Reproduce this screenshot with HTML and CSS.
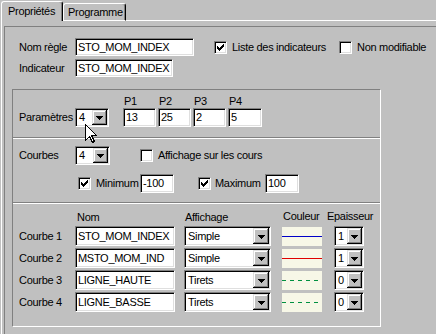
FILE: index.html
```html
<!DOCTYPE html>
<html lang="fr">
<head>
<meta charset="utf-8">
<title>Propriétés</title>
<link rel="stylesheet" href="styles.css">
</head>
<body>
<div class="win">
  <div class="tabs">
    <div class="tab active">Propriétés</div>
    <div class="tab inactive">Programme</div>
    <div class="tab-fill"></div>
  </div>
  <div class="panel">
    <div class="sunken">
      <div class="row r-nom">
        <span class="lbl">Nom règle</span>
        <span class="field sunk w-nom h18">STO_MOM_INDEX</span>
        <span class="check sunk ml-liste"><svg width="9" height="9" viewBox="0 0 9 9" shape-rendering="crispEdges"><path d="M1 3h1v3h-1zM2 4h1v3h-1zM3 5h1v3h-1zM4 4h1v3h-1zM5 3h1v3h-1zM6 2h1v3h-1zM7 1h1v3h-1z" fill="#000"/></svg></span>
        <span class="ctext w-liste">Liste des indicateurs</span>
        <span class="check sunk"></span>
        <span class="ctext">Non modifiable</span>
      </div>
      <div class="row r-ind">
        <span class="lbl">Indicateur</span>
        <span class="field sunk w-ind h18">STO_MOM_INDEX</span>
      </div>

      <div class="group">
        <div class="sec sec1">
          <div class="param-main">
            <span class="lbl">Paramètres</span>
            <span class="combo sunk w34 h19"><span class="cval">4</span><span class="cbtn sm"><svg width="7" height="4" viewBox="0 0 7 4" shape-rendering="crispEdges"><path d="M0 0H7V1H6V2H5V3H4V4H3V3H2V2H1V1H0Z"/></svg></span></span>
          </div>
          <div class="pcols">
            <div class="pcol"><span class="plbl">P1</span><span class="field sunk w33 h19">13</span></div>
            <div class="pcol"><span class="plbl">P2</span><span class="field sunk w33 h19">25</span></div>
            <div class="pcol"><span class="plbl">P3</span><span class="field sunk w33 h19">2</span></div>
            <div class="pcol"><span class="plbl">P4</span><span class="field sunk w34 h19">5</span></div>
          </div>
        </div>

        <div class="sec sec2">
          <div class="row crow-a">
            <span class="lbl">Courbes</span>
            <span class="combo sunk w35 h19"><span class="cval">4</span><span class="cbtn sm"><svg width="7" height="4" viewBox="0 0 7 4" shape-rendering="crispEdges"><path d="M0 0H7V1H6V2H5V3H4V4H3V3H2V2H1V1H0Z"/></svg></span></span>
            <span class="check sunk ml-aff"></span>
            <span class="ctext">Affichage sur les cours</span>
          </div>
          <div class="row crow-b">
            <span class="check sunk ml-min"><svg width="9" height="9" viewBox="0 0 9 9" shape-rendering="crispEdges"><path d="M1 3h1v3h-1zM2 4h1v3h-1zM3 5h1v3h-1zM4 4h1v3h-1zM5 3h1v3h-1zM6 2h1v3h-1zM7 1h1v3h-1z" fill="#000"/></svg></span>
            <span class="ctext w-min">Minimum</span>
            <span class="field sunk w34 h19">-100</span>
            <span class="check sunk ml-max"><svg width="9" height="9" viewBox="0 0 9 9" shape-rendering="crispEdges"><path d="M1 3h1v3h-1zM2 4h1v3h-1zM3 5h1v3h-1zM4 4h1v3h-1zM5 3h1v3h-1zM6 2h1v3h-1zM7 1h1v3h-1z" fill="#000"/></svg></span>
            <span class="ctext w-max">Maximum</span>
            <span class="field sunk w34 h19">100</span>
          </div>
        </div>

        <div class="sec sec3">
          <div class="grid">
            <span></span>
            <span class="th th-nom">Nom</span>
            <span class="th th-aff">Affichage</span>
            <span class="th th-coul">Couleur</span>
            <span class="th th-ep">Epaisseur</span>

            <span class="lbl">Courbe 1</span>
            <span class="field sunk w100 h20">STO_MOM_INDEX</span>
            <span class="combo sunk w87 h20"><span class="cval">Simple</span><span class="cbtn"><svg width="7" height="4" viewBox="0 0 7 4" shape-rendering="crispEdges"><path d="M0 0H7V1H6V2H5V3H4V4H3V3H2V2H1V1H0Z"/></svg></span></span>
            <span class="swatch"><svg width="40" height="19" viewBox="0 0 40 19" shape-rendering="crispEdges"><line x1="0" y1="9.5" x2="40" y2="9.5" stroke="#0000c8" stroke-width="1"/></svg></span>
            <span class="combo sunk w30 h20"><span class="cval">1</span><span class="cbtn sm"><svg width="7" height="4" viewBox="0 0 7 4" shape-rendering="crispEdges"><path d="M0 0H7V1H6V2H5V3H4V4H3V3H2V2H1V1H0Z"/></svg></span></span>

            <span class="lbl">Courbe 2</span>
            <span class="field sunk w100 h20">MSTO_MOM_IND</span>
            <span class="combo sunk w87 h20"><span class="cval">Simple</span><span class="cbtn"><svg width="7" height="4" viewBox="0 0 7 4" shape-rendering="crispEdges"><path d="M0 0H7V1H6V2H5V3H4V4H3V3H2V2H1V1H0Z"/></svg></span></span>
            <span class="swatch"><svg width="40" height="19" viewBox="0 0 40 19" shape-rendering="crispEdges"><line x1="0" y1="9.5" x2="40" y2="9.5" stroke="#e00000" stroke-width="1"/></svg></span>
            <span class="combo sunk w30 h20"><span class="cval">1</span><span class="cbtn sm"><svg width="7" height="4" viewBox="0 0 7 4" shape-rendering="crispEdges"><path d="M0 0H7V1H6V2H5V3H4V4H3V3H2V2H1V1H0Z"/></svg></span></span>

            <span class="lbl">Courbe 3</span>
            <span class="field sunk w100 h20">LIGNE_HAUTE</span>
            <span class="combo sunk w87 h20"><span class="cval">Tirets</span><span class="cbtn"><svg width="7" height="4" viewBox="0 0 7 4" shape-rendering="crispEdges"><path d="M0 0H7V1H6V2H5V3H4V4H3V3H2V2H1V1H0Z"/></svg></span></span>
            <span class="swatch"><svg width="40" height="19" viewBox="0 0 40 19" shape-rendering="crispEdges"><line x1="0" y1="9.5" x2="40" y2="9.5" stroke="#009040" stroke-width="1" stroke-dasharray="4 4"/></svg></span>
            <span class="combo sunk w30 h20"><span class="cval">0</span><span class="cbtn sm"><svg width="7" height="4" viewBox="0 0 7 4" shape-rendering="crispEdges"><path d="M0 0H7V1H6V2H5V3H4V4H3V3H2V2H1V1H0Z"/></svg></span></span>

            <span class="lbl">Courbe 4</span>
            <span class="field sunk w100 h20">LIGNE_BASSE</span>
            <span class="combo sunk w87 h20"><span class="cval">Tirets</span><span class="cbtn"><svg width="7" height="4" viewBox="0 0 7 4" shape-rendering="crispEdges"><path d="M0 0H7V1H6V2H5V3H4V4H3V3H2V2H1V1H0Z"/></svg></span></span>
            <span class="swatch"><svg width="40" height="19" viewBox="0 0 40 19" shape-rendering="crispEdges"><line x1="0" y1="9.5" x2="40" y2="9.5" stroke="#009040" stroke-width="1" stroke-dasharray="4 4"/></svg></span>
            <span class="combo sunk w30 h20"><span class="cval">0</span><span class="cbtn sm"><svg width="7" height="4" viewBox="0 0 7 4" shape-rendering="crispEdges"><path d="M0 0H7V1H6V2H5V3H4V4H3V3H2V2H1V1H0Z"/></svg></span></span>
          </div>
        </div>
      </div>
    </div>
  </div>

  <svg class="cursor" width="12" height="19" viewBox="0 0 12 19" shape-rendering="crispEdges">
    <path d="M0.5 0.5V16.5L4.5 12.5L7.5 18.5L9.5 17.5L6.5 11.5H11.5Z" fill="#fff" stroke="#000" stroke-width="1" stroke-linejoin="miter"/>
  </svg>
</div>
</body>
</html>
```

FILE: styles.css
```css
* { box-sizing: border-box; }
html, body { margin: 0; padding: 0; }
body {
  background: #c0c0c0;
  font: 11px/13px "Liberation Sans", Arial, sans-serif;
  letter-spacing: -0.3px;
  color: #000;
}
.win {
  position: relative;
  width: 436px;
  height: 334px;
  overflow: hidden;
  padding-left: 1px;
}

/* tabs */
.tabs { display: flex; align-items: flex-start; height: 21px; }
.tab {
  display: flex;
  align-items: center;
  white-space: nowrap;
  border-top: 1px solid #fff;
  border-left: 1px solid #fff;
  border-right: 1px solid #000;
  box-shadow: inset -1px 0 #808080;
  border-radius: 3px 3px 0 0;
}
.tab.active { margin-top: 1px; height: 20px; width: 62px; padding-left: 6px; }
.tab.inactive {
  margin-top: 3px;
  height: 18px;
  width: 63px;
  padding-left: 4px;
  border-bottom: 1px solid #fff;
  border-radius: 3px 3px 0 0;
}
.tab-fill { flex: 1; height: 21px; border-bottom: 1px solid #fff; }

.panel {
  border-left: 1px solid #fff;
  padding: 5px 0 0 2px;
  height: 313px;
}
.sunken {
  height: 100%;
  border-top: 1px solid #808080;
  border-left: 1px solid #808080;
}

/* generic */
.row { display: flex; align-items: center; }
.lbl { width: 56px; flex: none; white-space: nowrap; }
.ctext { white-space: nowrap; margin-left: 5px; flex: none; }

.sunk {
  background: #fff;
  border: 1px solid;
  border-color: #808080 #fff #fff #808080;
  box-shadow: inset 1px 1px #000, inset -1px -1px #dfdfdf;
}
.field {
  display: flex;
  align-items: center;
  padding-left: 2px;
  overflow: hidden;
  white-space: nowrap;
  flex: none;
}
.combo { display: flex; padding: 1px; flex: none; }
.cval {
  flex: 1;
  display: flex;
  align-items: center;
  padding-left: 2px;
  overflow: hidden;
  white-space: nowrap;
}
.cbtn {
  flex: none;
  width: 16px;
  background: #c0c0c0;
  box-shadow: inset -1px -1px #000, inset 1px 1px #dfdfdf, inset -2px -2px #808080, inset 2px 2px #fff;
  display: flex;
  align-items: center;
  justify-content: center;
}
.cbtn.sm { width: 15px; }
.cbtn svg { display: block; margin-top: 1px; }

.check {
  flex: none;
  width: 13px;
  height: 13px;
  padding: 1px;
  display: flex;
}
.check svg { display: block; }

.h18 { height: 18px; }
.h19 { height: 19px; }
.h20 { height: 20px; }
.w30 { width: 30px; }
.w33 { width: 33px; }
.w34 { width: 34px; }
.w35 { width: 35px; }
.w87 { width: 87px; }
.w100 { width: 100px; }

/* top rows */
.r-nom { margin-top: 11px; height: 18px; padding-left: 14px; }
.r-ind { margin-top: 3px; height: 18px; padding-left: 14px; }
.w-nom { width: 119px; }
.w-ind { width: 98px; }
.ml-liste { margin-left: 20px; }
.w-liste { width: 107px; }

/* group box */
.group {
  margin: 12px 0 0 7px;
  width: 369px;
  height: 238px;
  border: 1px solid;
  border-color: #808080 #fff #fff #808080;
}
.sec1 {
  height: 48px;
  border-bottom: 1px solid #808080;
  padding: 5px 0 0 6px;
  display: flex;
  align-items: flex-start;
}
.param-main { display: flex; align-items: center; margin-top: 13px; }
.pcols { display: flex; gap: 2px; margin-left: 14px; }
.pcol { display: flex; flex-direction: column; }
.plbl { height: 13px; padding-left: 1px; }

.sec2 {
  height: 65px;
  border-top: 1px solid #fff;
  border-bottom: 1px solid #808080;
  padding: 7px 0 0 6px;
}
.crow-a { height: 19px; }
.crow-b { height: 19px; margin-top: 9px; }
.ml-aff { margin-left: 30px; }
.ml-min { margin-left: 59px; }
.w-min { width: 44px; }
.ml-max { margin-left: 24px; }
.w-max { width: 50px; margin-left: 4px; }

.sec3 {
  height: 123px;
  border-top: 1px solid #fff;
  padding: 7px 0 0 6px;
}
.grid {
  display: grid;
  grid-template-columns: 56px 109px 98px 52px 30px;
  grid-template-rows: 13px repeat(4, 20px);
  row-gap: 2px;
  align-items: center;
}
.th { white-space: nowrap; }
.th-nom { padding-left: 2px; }
.th-aff { padding-left: 1px; }
.th-coul { padding-left: 1px; margin-top: -3px; }
.th-ep { margin-left: -7px; margin-top: -3px; }
.swatch {
  width: 40px;
  height: 19px;
  background: #f7f7e7;
  display: block;
}
.swatch svg { display: block; }

.cursor {
  position: absolute;
  left: 85px;
  top: 124px;
}
```
